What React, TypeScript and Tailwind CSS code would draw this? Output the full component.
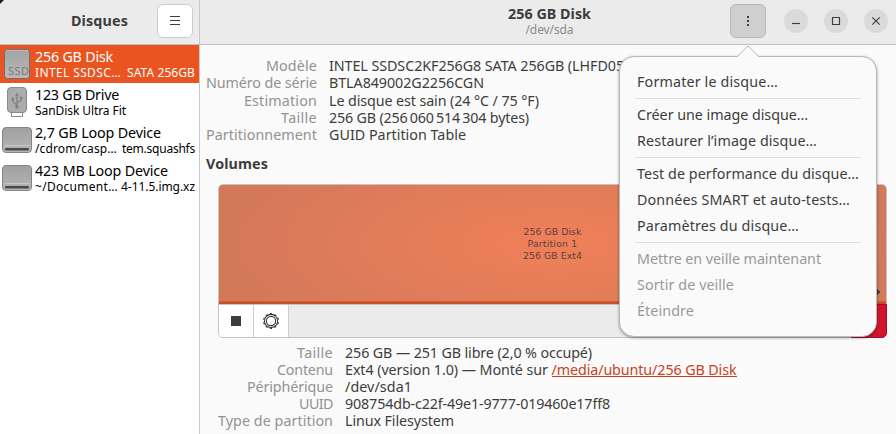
import { useLayoutEffect, useRef, useState } from "react";
import type { ReactNode } from "react";

/** One line of text whose letter spacing is adjusted to fill the given width. */
function Fit({ w, className = "", children }: { w: number; className?: string; children: string }) {
  const ref = useRef<HTMLSpanElement>(null);
  const [spacing, setSpacing] = useState(0);
  useLayoutEffect(() => {
    if (ref.current) {
      const natural = ref.current.getBoundingClientRect().width;
      setSpacing((w - natural) / children.length);
    }
  }, [w, children]);
  return (
    <span ref={ref} className={`inline-block whitespace-pre ${className}`} style={{ letterSpacing: `${spacing}px` }}>
      {children}
    </span>
  );
}

function SsdIcon() {
  return (
    <svg width="34" height="38" viewBox="0 0 34 38">
      <defs>
        <linearGradient id="ssd" x1="0" y1="0" x2="0" y2="1">
          <stop offset="0" stopColor="#a3a3a3" />
          <stop offset="1" stopColor="#b9b9b9" />
        </linearGradient>
      </defs>
      <rect x="4.5" y="4.5" width="25" height="29" rx="3" fill="url(#ssd)" stroke="#776e69" />
      <path d="M6 5.5h22" stroke="#bdbdbd" />
      <text x="8" y="30" fontSize="11" textLength="21" fill="#7b7b7b" fontFamily="Noto Sans, sans-serif">SSD</text>
    </svg>
  );
}

function UsbIcon() {
  return (
    <svg width="34" height="38" viewBox="0 0 34 38">
      <rect x="11.5" y="28" width="11" height="5.5" fill="#fff" stroke="#8a8a8a" />
      <rect x="7.5" y="4.5" width="19" height="25" rx="3.5" fill="#acacac" stroke="#898989" />
      <g fill="none" stroke="#808080" strokeWidth="1.2">
        <path d="M17 11v13M17 22l-4.2-3.2v-2.3M17 20l4.2-2.7V15" />
      </g>
      <path d="M17 9.5l1.9 3.2h-3.8z" fill="#808080" />
      <circle cx="17" cy="24" r="1.8" fill="#808080" />
      <circle cx="12.8" cy="16" r="1.4" fill="#808080" />
      <rect x="20" y="13.8" width="2.5" height="2.5" fill="#808080" />
    </svg>
  );
}

function DriveIcon() {
  return (
    <svg width="34" height="38" viewBox="0 0 34 38">
      <defs>
        <linearGradient id="drive" x1="0" y1="0" x2="0" y2="1">
          <stop offset="0" stopColor="#a0a0a0" />
          <stop offset="1" stopColor="#b6b6b6" />
        </linearGradient>
      </defs>
      <rect x="2.5" y="6.5" width="29" height="25" rx="3.5" fill="url(#drive)" stroke="#858585" />
      <path d="M4.5 24.5h25" stroke="#c6c6c6" />
      <rect x="5" y="27" width="24" height="2.4" rx="1" fill="#4a4a4a" />
    </svg>
  );
}

function DeviceRow({ icon, selected, title, titleW, children }: {
  icon: ReactNode; selected?: boolean; title: string; titleW: number; children: ReactNode;
}) {
  return (
    <li className={`flex h-[38px] ${selected ? "bg-[#e95420] text-white" : "text-black"}`}>
      <div className="w-[35px] shrink-0">{icon}</div>
      <div className="flex w-40 flex-col pt-[4px]">
        <Fit w={titleW} className="self-start text-[14.3px] leading-[16px]">{title}</Fit>
        <div className="flex justify-between pt-px text-[12px] leading-[14px]">{children}</div>
      </div>
    </li>
  );
}

type Info = { label: string; lw: number; value: string; vw: number; link?: string; linkW?: number };

const diskInfo: Info[] = [
  { label: "Modèle", lw: 51, value: "INTEL SSDSC2KF256G8 SATA 256GB (LHFD05", vw: 295 },
  { label: "Numéro de série", lw: 111, value: "BTLA849002G2256CGN", vw: 155 },
  { label: "Estimation", lw: 73, value: "Le disque est sain (24 °C / 75 °F)", vw: 210 },
  { label: "Taille", lw: 36, value: "256 GB (256\u2009060\u2009514\u2009304 bytes)", vw: 200 },
  { label: "Partitionnement", lw: 111, value: "GUID Partition Table", vw: 137 },
];

const volumeInfo: Info[] = [
  { label: "Taille", lw: 36, value: "256 GB — 251 GB libre (2,0 % occupé)", vw: 247 },
  { label: "Contenu", lw: 56, value: "Ext4 (version 1.0) — Monté sur ", vw: 206.5, link: "/media/ubuntu/256 GB Disk", linkW: 185 },
  { label: "Périphérique", lw: 86, value: "/dev/sda1", vw: 67 },
  { label: "UUID", lw: 34, value: "908754db-c22f-49e1-9777-019460e17ff8", vw: 265 },
  { label: "Type de partition", lw: 115, value: "Linux Filesystem", vw: 109 },
];

function InfoList({ items, labelCol, row }: { items: Info[]; labelCol: string; row: string }) {
  return (
    <dl className="text-[14.3px]">
      {items.map((i) => (
        <div key={i.label} className={`flex gap-3 ${row}`}>
          <dt className={`flex shrink-0 justify-end text-[#929292] ${labelCol}`}><Fit w={i.lw}>{i.label}</Fit></dt>
          <dd className="flex whitespace-pre">
            <Fit w={i.vw}>{i.value}</Fit>
            {i.link && <Fit w={i.linkW ?? 0} className="h-[16px] border-b border-[#c7421a] text-[#c7421a]">{i.link}</Fit>}
          </dd>
        </div>
      ))}
    </dl>
  );
}

function GearIcon() {
  const teeth = Array.from({ length: 10 }, (_, n) => n * 36);
  return (
    <svg width="18" height="18" viewBox="0 0 18 18" fill="none" stroke="#3d3d3d">
      <circle cx="9" cy="9" r="6.6" strokeWidth="1.1" />
      <circle cx="9" cy="9" r="4.6" strokeWidth="1.1" />
      {teeth.map((a) => <path key={a} d="M7.9 1.6h2.2" strokeWidth="1.2" transform={`rotate(${a} 9 9)`} />)}
    </svg>
  );
}

const menuGroups: { off?: boolean; items: [string, number][] }[] = [
  { items: [["Formater le disque…", 141]] },
  { items: [["Créer une image disque…", 171], ["Restaurer l’image disque…", 180]] },
  { items: [["Test de performance du disque…", 222], ["Données SMART et auto-tests…", 213], ["Paramètres du disque…", 162]] },
  { off: true, items: [["Mettre en veille maintenant", 184], ["Sortir de veille", 97], ["Éteindre", 57]] },
];

function DiskMenu() {
  return (
    <div className="absolute left-[619px] top-[56px] h-[281px] w-[258px] rounded-[15px] border border-[#b8b8b8] bg-[#fafafa] px-[15px] pt-[12px] shadow-[0_1px_3px_rgba(0,0,0,0.38)]">
      <svg className="absolute left-[116px] top-[-12px]" width="24" height="13" viewBox="0 0 24 13">
        <path d="M1 13V12L12 1L23 12V13Z" fill="#fafafa" />
        <path d="M0 11.5H1.2L12 1L22.8 11.5H24" fill="none" stroke="#b8b8b8" />
      </svg>
      {menuGroups.map((g, n) => (
        <ul key={n} className={`${n ? "mt-[3px] border-t border-[#dedede] pt-[3px]" : ""} ${g.off ? "text-[#999]" : "text-[#3d3d3d]"}`}>
          {g.items.map(([name, w]) => (
            <li key={name} className="h-[26px] pl-[2px] text-[14.3px] leading-[26px]"><Fit w={w}>{name}</Fit></li>
          ))}
        </ul>
      ))}
    </div>
  );
}

export default function App() {
  return (
    <div className="relative flex h-[434px] w-[896px] overflow-hidden bg-[#fafafa] font-['Noto_Sans','Open_Sans',sans-serif] text-[#3d3d3d]">
      <aside className="flex w-[200px] shrink-0 flex-col border-r border-[#c8c8c8] bg-white">
        <header className="flex h-[45px] items-start border-b border-[#bfbfbf] bg-[#ebebeb] pl-[71px] pt-[4px]">
          <div className="w-[86px] pt-[6px] leading-[20px]">
            <Fit w={57} className="text-[14.3px] font-bold">Disques</Fit>
          </div>
          <button className="flex h-[34px] w-[36px] items-center justify-center rounded-[6px] border border-[#cdcdcd] bg-white">
            <svg width="10" height="10" viewBox="0 0 10 10" stroke="#3d3d3d"><path d="M0 .5h10M0 4.5h10M0 8.5h10" /></svg>
          </button>
        </header>
        <ul>
          <DeviceRow selected icon={<SsdIcon />} title="256 GB Disk" titleW={78}>
            <Fit w={86}>INTEL SSDSC…</Fit><Fit w={68}>SATA 256GB</Fit>
          </DeviceRow>
          <DeviceRow icon={<UsbIcon />} title="123 GB Drive" titleW={84}>
            <Fit w={91}>SanDisk Ultra Fit</Fit>
          </DeviceRow>
          <DeviceRow icon={<DriveIcon />} title="2,7 GB Loop Device" titleW={126}>
            <Fit w={82}>/cdrom/casp…</Fit><Fit w={73}>tem.squashfs</Fit>
          </DeviceRow>
          <DeviceRow icon={<DriveIcon />} title="423 MB Loop Device" titleW={133}>
            <Fit w={83}>~/Document…</Fit><Fit w={74}>4-11.5.img.xz</Fit>
          </DeviceRow>
        </ul>
      </aside>

      <main className="flex w-[696px] flex-col">
        <header className="flex h-[45px] shrink-0 border-b border-[#bfbfbf] bg-[#ebebeb] pt-[4px]">
          <div className="ml-[250px] flex w-[199px] flex-col items-center pt-px">
            <Fit w={83} className="text-[14.3px] font-bold leading-[18px]">256 GB Disk</Fit>
            <Fit w={48} className="text-[12px] leading-[14px] text-[#8c8c8c]">/dev/sda</Fit>
          </div>
          <button className="ml-[81px] flex h-[34px] w-[36px] items-center justify-center rounded-[6px] border border-[#b8b8b8] bg-[#cfcfcf]">
            <svg width="2" height="10" viewBox="0 0 2 10" fill="#3d3d3d"><path d="M0 0h2v2H0zM0 4h2v2H0zM0 8h2v2H0z" /></svg>
          </button>
          <div className="ml-[18px] flex gap-4 pt-[5px]">
            {["M8 14.5h8", "M8.5 8.5h7v7h-7z", "M8.3 8.3l7.4 7.4M15.7 8.3l-7.4 7.4"].map((d) => (
              <button key={d} className="size-6 rounded-full bg-[#dadada]">
                <svg width="24" height="24" viewBox="0 0 24 24" fill="none" stroke="#3d3d3d" strokeWidth="1.15"><path d={d} /></svg>
              </button>
            ))}
          </div>
        </header>

        <div className="h-[128px] shrink-0 pl-[6px] pt-[12px]">
          <InfoList items={diskInfo} labelCol="w-[111px]" row="h-[17.3px] leading-[17.3px]" />
          <h2 className="mt-[11.5px] h-[18px] text-[14.3px] font-bold leading-[18px]"><Fit w={62}>Volumes</Fit></h2>
        </div>

        <section className="ml-[18px] mt-[11px] h-[154px] w-[669px] shrink-0 rounded-[5px] border border-[#c3c3c3] bg-[#ebebeb]">
          <div className="flex h-[119px] flex-col items-center justify-center rounded-t-[4px] border-b-2 border-[#cb4f26] bg-[radial-gradient(ellipse_50%_100%_at_50%_50%,#f08059,#d37959)] font-['DejaVu_Sans',sans-serif] text-[9.33px] leading-[12px] text-[#5c4139] shadow-[inset_0_-1px_0_#cd6039]">
            <Fit w={58}>256 GB Disk</Fit>
            <Fit w={50}>Partition 1</Fit>
            <Fit w={59}>256 GB Ext4</Fit>
            <svg className="absolute left-[874px] top-[287px]" width="8" height="10" viewBox="0 0 8 10"><path d="M1 0l5.5 5L1 10z" fill="#3d3d3d" /></svg>
          </div>
          <div className="flex h-[33px] border-t border-[#c3c3c3]">
            <button className="flex w-[35px] items-center justify-center rounded-bl-[4px] border-r border-[#cdcdcd] bg-white"><span className="size-[10px] bg-[#3d3d3d]" /></button>
            <button className="flex w-[35px] items-center justify-center border-r border-[#cdcdcd] bg-white"><GearIcon /></button>
            <button className="-mt-px -mr-px -mb-px ml-auto w-[36px] rounded-br-[5px] border border-[#a30f24] bg-[#d4142f]" />
          </div>
        </section>

        <div className="pl-[18px] pt-[6px]">
          <InfoList items={volumeInfo} labelCol="w-[115px]" row="h-[17px] leading-[17px]" />
        </div>
      </main>

      <DiskMenu />
      <div className="absolute left-0 top-0 size-[4px] bg-[#3a1030] [clip-path:polygon(0_0,100%_0,0_100%)]" />
    </div>
  );
}
